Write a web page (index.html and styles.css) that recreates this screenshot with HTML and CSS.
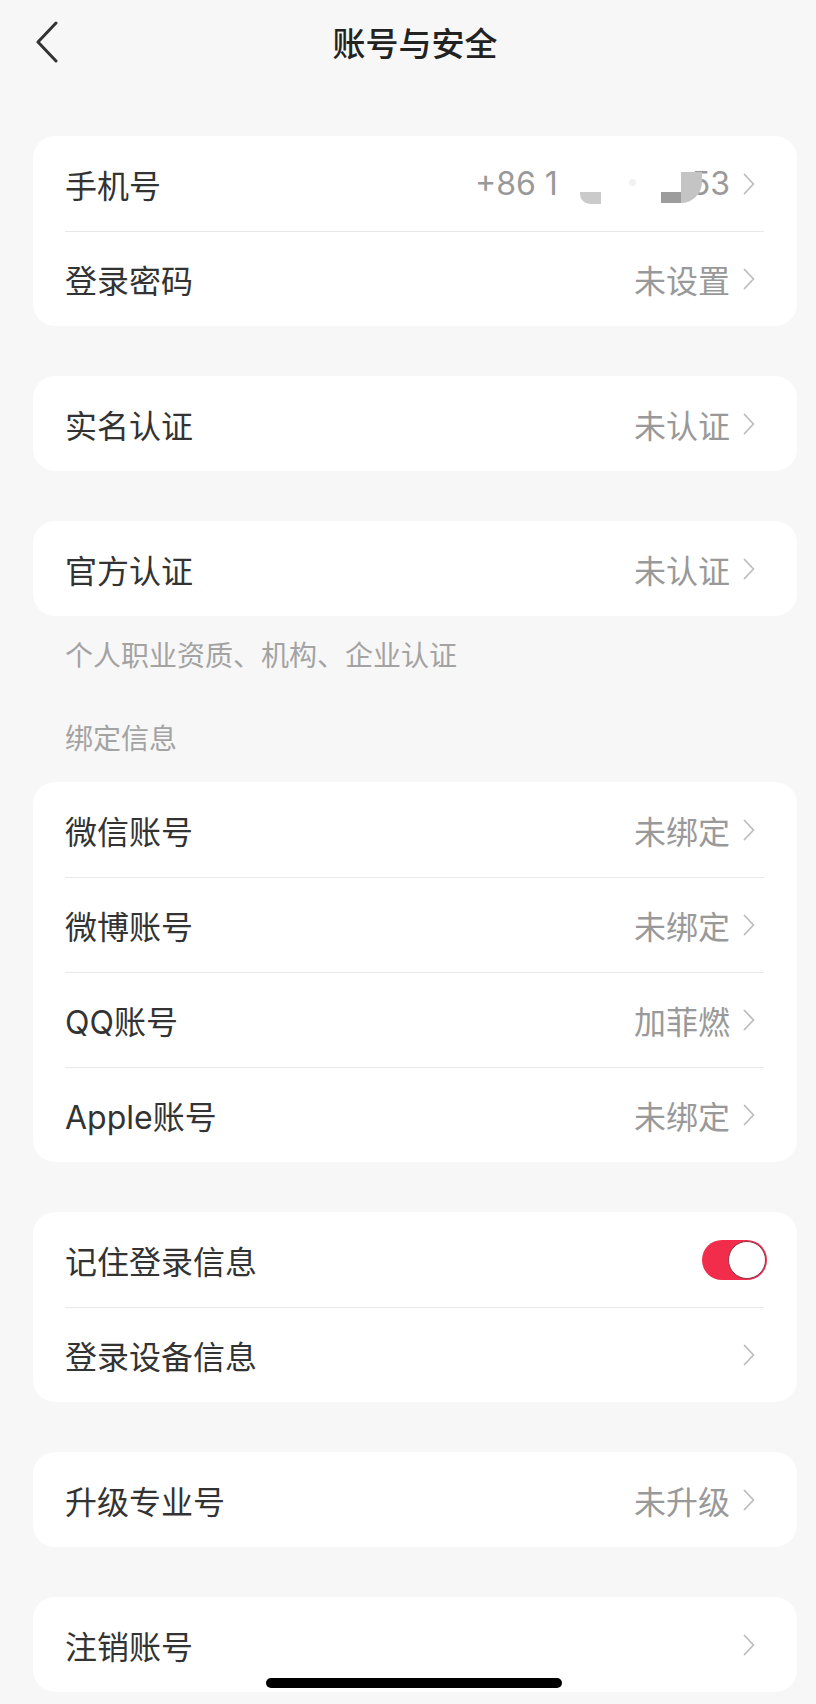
FILE: index.html
```html
<!DOCTYPE html>
<html lang="zh-CN">
<head>
  <meta charset="UTF-8" />
  <title>账号与安全</title>
  <link rel="stylesheet" href="styles.css">
</head>
<body>

<div class="page">
  <header class="nav">
    <a class="back" href="#">
      <svg width="24" height="44" viewBox="0 0 24 44"><polyline points="20,3 2,22 20,41" /></svg>
    </a>
    <h1 class="title">账号与安全</h1>
    <span></span>
  </header>

  <section class="card">
    <div class="row">
      <span class="label">手机号</span>
      <span class="value phone">+86 1<span class="mask"><i class="blot b1"></i><i class="blot b2"></i><i class="blot b3"></i><i class="blot b4"></i></span>53</span>
      <svg class="arrow" width="12" height="22" viewBox="0 0 12 22"><polyline points="1.5,1.5 10.5,11 1.5,20.5" /></svg>
    </div>
    <div class="row">
      <span class="label">登录密码</span>
      <span class="value">未设置</span>
      <svg class="arrow" width="12" height="22" viewBox="0 0 12 22"><polyline points="1.5,1.5 10.5,11 1.5,20.5" /></svg>
    </div>
  </section>

  <section class="card">
    <div class="row">
      <span class="label">实名认证</span>
      <span class="value">未认证</span>
      <svg class="arrow" width="12" height="22" viewBox="0 0 12 22"><polyline points="1.5,1.5 10.5,11 1.5,20.5" /></svg>
    </div>
  </section>

  <section class="card">
    <div class="row">
      <span class="label">官方认证</span>
      <span class="value">未认证</span>
      <svg class="arrow" width="12" height="22" viewBox="0 0 12 22"><polyline points="1.5,1.5 10.5,11 1.5,20.5" /></svg>
    </div>
  </section>

  <p class="note">个人职业资质、机构、企业认证</p>
  <p class="section-title">绑定信息</p>

  <section class="card">
    <div class="row">
      <span class="label">微信账号</span>
      <span class="value">未绑定</span>
      <svg class="arrow" width="12" height="22" viewBox="0 0 12 22"><polyline points="1.5,1.5 10.5,11 1.5,20.5" /></svg>
    </div>
    <div class="row">
      <span class="label">微博账号</span>
      <span class="value">未绑定</span>
      <svg class="arrow" width="12" height="22" viewBox="0 0 12 22"><polyline points="1.5,1.5 10.5,11 1.5,20.5" /></svg>
    </div>
    <div class="row">
      <span class="label">QQ账号</span>
      <span class="value">加菲燃</span>
      <svg class="arrow" width="12" height="22" viewBox="0 0 12 22"><polyline points="1.5,1.5 10.5,11 1.5,20.5" /></svg>
    </div>
    <div class="row">
      <span class="label">Apple账号</span>
      <span class="value">未绑定</span>
      <svg class="arrow" width="12" height="22" viewBox="0 0 12 22"><polyline points="1.5,1.5 10.5,11 1.5,20.5" /></svg>
    </div>
  </section>

  <section class="card">
    <div class="row">
      <span class="label">记住登录信息</span>
      <span class="switch on"></span>
    </div>
    <div class="row">
      <span class="label">登录设备信息</span>
      <svg class="arrow" width="12" height="22" viewBox="0 0 12 22"><polyline points="1.5,1.5 10.5,11 1.5,20.5" /></svg>
    </div>
  </section>

  <section class="card">
    <div class="row">
      <span class="label">升级专业号</span>
      <span class="value">未升级</span>
      <svg class="arrow" width="12" height="22" viewBox="0 0 12 22"><polyline points="1.5,1.5 10.5,11 1.5,20.5" /></svg>
    </div>
  </section>

  <section class="card">
    <div class="row">
      <span class="label">注销账号</span>
      <svg class="arrow" width="12" height="22" viewBox="0 0 12 22"><polyline points="1.5,1.5 10.5,11 1.5,20.5" /></svg>
    </div>
  </section>
</div>

<div class="home-bar"></div>

</body>
</html>
```

FILE: styles.css
```css
body {
  margin: 0;
  background-color: #f7f7f7;
  font-family: Inter, "Noto Sans CJK SC", sans-serif;
  color: #333;
}

.page {
  padding: 0 19px 0 33px;
}

/* top bar */
.nav {
  height: 84px;
  display: grid;
  grid-template-columns: 1fr auto 1fr;
  align-items: center;
}
.back {
  display: flex;
  margin-left: 3px;
}
.back polyline {
  fill: none;
  stroke: #333;
  stroke-width: 3;
  stroke-linecap: round;
  stroke-linejoin: round;
}
.title {
  margin: 0;
  font-family: "Noto Sans CJK SC", sans-serif;
  font-size: 33px;
  font-weight: 500;
  color: #222;
}

/* cards */
.card {
  background-color: #fff;
  border-radius: 22px;
}
.nav + .card {
  margin-top: 52px;
}
.card + .card {
  margin-top: 50px;
}
.row {
  display: flex;
  align-items: center;
  height: 95px;
  margin: 0 33px 0 32px;
  box-sizing: border-box;
}
.row + .row {
  border-top: 1px solid #e8e8e8;
}
.label {
  flex: 1;
  font-size: 32px;
  color: #333;
}
.value {
  font-size: 32px;
  color: #999;
  margin-right: 13px;
}
.arrow {
  margin-right: 9px;
}
.arrow polyline {
  fill: none;
  stroke: #bdbdbd;
  stroke-width: 1.8;
  stroke-linecap: round;
  stroke-linejoin: round;
}

/* blurred phone number */
.phone {
  display: flex;
  align-items: center;
}
.mask {
  display: inline-block;
  position: relative;
  width: 133px;
  height: 40px;
}
.blot {
  position: absolute;
}
.b1 {
  left: 22px;
  top: 28px;
  width: 21px;
  height: 12px;
  background-color: #cacaca;
  border-radius: 0 0 0 10px;
}
.b2 {
  left: 71px;
  top: 15px;
  width: 7px;
  height: 7px;
  background-color: #f1f1f1;
  border-radius: 50%;
}
.b3 {
  left: 103px;
  top: 28px;
  width: 20px;
  height: 11px;
  background-color: #9c9c9c;
}
.b4 {
  left: 123px;
  top: 8px;
  width: 21px;
  height: 31px;
  background-color: #c4c4c4;
  border-radius: 0 0 21px 0;
}

/* captions */
.note {
  margin: 20px 0 0 32px;
  font-size: 28px;
  line-height: 40px;
  color: #a3a3a3;
}
.section-title {
  margin: 43px 0 23px 32px;
  font-size: 28px;
  line-height: 40px;
  color: #a3a3a3;
}

/* toggle */
.switch {
  position: relative;
  width: 65px;
  height: 40px;
  border-radius: 20px;
  background-color: #f22d4b;
  margin-right: -3px;
}
.switch::after {
  content: "";
  position: absolute;
  right: 1px;
  top: 1px;
  width: 38px;
  height: 38px;
  border-radius: 50%;
  background-color: #fff;
  box-sizing: border-box;
  border: 1.5px solid #8a3a4a;
}

.home-bar {
  position: fixed;
  left: calc(50% - 142px);
  bottom: 16px;
  width: 296px;
  height: 10px;
  border-radius: 5px;
  background-color: #000;
}
```
